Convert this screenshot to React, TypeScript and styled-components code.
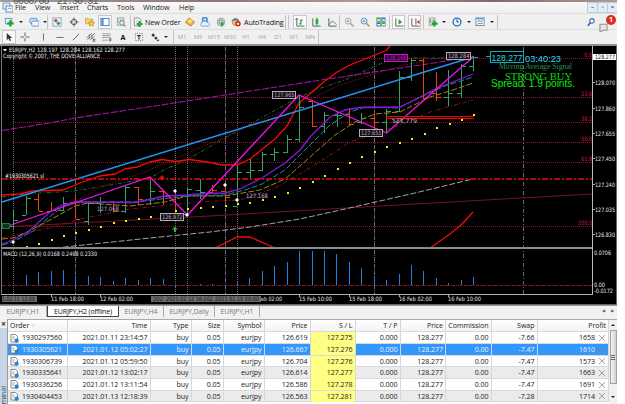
import React from "react";
import styled, { createGlobalStyle, css } from "styled-components";

const Global = createGlobalStyle`
  * { box-sizing: border-box; }
  body { margin: 0; background: #fff; overflow: hidden; font-family: "Open Sans", "Noto Sans", sans-serif; }
`;

const Window = styled.div`
  position: relative;
  display: flex;
  flex-direction: column;
  width: 617px;
  height: 404px;
  overflow: hidden;
  background: #f0f0f0;
`;
const Backdrop = styled.div`
  flex: none;
  height: 2px;
  background: linear-gradient(90deg, #a79c98, #8b7772 35%, #b79b95 60%, #806a66 80%, #b49a94);
`;
const Stamp = styled.div`
  position: absolute;
  left: 13px;
  top: -4px;
  z-index: 2;
  display: flex;
  gap: 8px;
  font: 10px/12px "Liberation Mono", monospace;
  letter-spacing: -0.9px;
  color: #555;
`;
const MenuBar = styled.div`
  flex: none;
  display: flex;
  align-items: center;
  height: 11px;
  padding-left: 2px;
  background: linear-gradient(#f8f8f8, #efefef);
`;
const MenuItem = styled.span<{ $w: number }>`
  width: ${(p) => p.$w}px;
  font-size: 7.2px;
  line-height: 11px;
  letter-spacing: -0.12px;
  color: #222;
  white-space: nowrap;
`;
const WindowButtons = styled.div`
  display: flex;
  margin-left: auto;
  height: 11px;
`;
const WindowButton = styled.span`
  width: 11px;
  height: 11px;
  margin-right: -1px;
  border: 1px solid #bccbdd;
  background: #e3edf8;
  color: #35506e;
  font: bold 6px/8px "Open Sans", sans-serif;
  text-align: center;
`;
const Toolbar = styled.div<{ $h: number }>`
  flex: none;
  display: flex;
  align-items: center;
  height: ${(p) => p.$h}px;
  border-top: 1px solid #dedede;
`;
const Slot = styled.div<{ $w: number; $pressed?: boolean }>`
  flex: none;
  display: flex;
  align-items: center;
  justify-content: center;
  width: ${(p) => p.$w}px;
  height: 14px;
  ${(p) =>
    p.$pressed &&
    css`
      background: #fafafa;
      border: 1px solid #c9c9c9;
    `}
`;
const Divider = styled.i`
  flex: none;
  width: 1px;
  height: 14px;
  background: #c4c4c4;
`;
const ToolLabel = styled.span<{ $w: number }>`
  flex: none;
  width: ${(p) => p.$w}px;
  font-size: 7.2px;
  letter-spacing: -0.15px;
  line-height: 14px;
  color: #111;
  white-space: nowrap;
`;
const Period = styled.span`
  flex: none;
  width: 16px;
  font-size: 6px;
  letter-spacing: -0.1px;
  color: #a5a5a5;
  text-align: center;
`;
const Caret = styled.i`
  border: 2px solid transparent;
  border-top: 2.5px solid #222;
  border-bottom: 0;
`;
const Spacer = styled.div`
  flex: 1;
`;
const ChatBox = styled.div`
  position: relative;
  width: 20px;
  height: 14px;
`;
const Badge = styled.span`
  position: absolute;
  left: 9px;
  top: 0;
  width: 10px;
  height: 10px;
  border-radius: 50%;
  background: #d8301d;
  color: #fff;
  font: bold 7px/10px "Open Sans", sans-serif;
  text-align: center;
`;
const ChartPane = styled.div`
  flex: none;
  height: 261px;
  border-top: 2px solid #929292;
  background: #000;
  svg { display: block; }
`;
const Tabs = styled.div`
  flex: none;
  display: flex;
  height: 14px;
  border-top: 1px solid #999;
  background: #f1f1f1;
`;
const Tab = styled.span<{ $w: number; $active?: boolean }>`
  flex: none;
  width: ${(p) => p.$w}px;
  height: 11px;
  font-size: 7px;
  line-height: 11px;
  letter-spacing: -0.16px;
  text-align: center;
  white-space: nowrap;
  color: ${(p) => (p.$active ? "#111" : "#7b7b7b")};
  border: solid ${(p) => (p.$active ? "#444" : "#aaa")};
  border-width: ${(p) => (p.$active ? "0 1px 1px 1px" : "0 1px 0 0")};
  background: ${(p) => (p.$active ? "#fff" : "transparent")};
`;
const TabArrows = styled.span`
  margin-left: auto;
  font-size: 4px;
  line-height: 10px;
  letter-spacing: 6px;
  margin-right: -3px;
  color: #555;
`;
const Terminal = styled.div`
  flex: 1;
  display: flex;
  min-height: 0;
  overflow: hidden;
`;
const Side = styled.div`
  display: flex;
  flex-direction: column;
  align-items: center;
  justify-content: space-between;
  width: 8px;
  background: linear-gradient(#f0f0f0 9px, #c6d6e7 9px);
  border-right: 1px solid #999;
  color: #222;
`;
const SideClose = styled.b`
  font-size: 8px;
  line-height: 9px;
`;
const SideTitle = styled.span`
  writing-mode: vertical-rl;
  transform: rotate(180deg);
  font-size: 7px;
  line-height: 7px;
  color: #33475c;
`;
const COLS = "59.5px 83px 41px 32px 41px 46px 45px 45px 45.5px 45.5px 46px 71.5px";
const Grid = styled.div`
  width: 601px;
  border-top: 1px solid #aaa;
  background: #fff;
`;
const Row = styled.div<{ $kind?: "head" | "sel" | "alt" }>`
  display: grid;
  grid-template-columns: ${COLS};
  height: ${(p) => (p.$kind === "head" ? 12.3 : 11.7)}px;
  font-size: 7.1px;
  line-height: 11.4px;
  letter-spacing: -0.06px;
  border-bottom: 1px solid #d9d9d9;
  color: ${(p) => (p.$kind === "sel" ? "#e8f3ff" : "#222")};
  background: ${(p) =>
    p.$kind === "sel" ? "#3296fa" : p.$kind === "alt" ? "#ebebeb" : p.$kind === "head" ? "linear-gradient(#fff, #f3f3f3)" : "#fff"};
`;
const Cell = styled.span<{ $left?: boolean; $stop?: boolean }>`
  display: flex;
  align-items: center;
  justify-content: ${(p) => (p.$left ? "flex-start" : "flex-end")};
  gap: 3px;
  height: 100%;
  padding: 0 2px;
  border-right: 1px solid #d4d8dc;
  white-space: nowrap;
  ${(p) =>
    p.$stop &&
    css`
      background: #ffff84;
      color: #222;
    `}
`;
const SortMark = styled.span`
  color: #999;
  font-size: 5px;
`;
const Scroll = styled.div`
  display: flex;
  flex-direction: column;
  align-items: center;
  width: 8px;
  border-top: 1px solid #aaa;
  background: #f1f1f1;
`;
const ScrollArrow = styled.i<{ $up?: boolean }>`
  margin: 4px 0;
  border: 2px solid transparent;
  ${(p) => (p.$up ? "border-bottom: 2.5px solid #222; border-top: 0;" : "margin-top: 12px; border-top: 2.5px solid #222; border-bottom: 0;")}
`;
const Thumb = styled.div`
  display: flex;
  flex-direction: column;
  align-items: center;
  justify-content: center;
  gap: 1px;
  width: 7px;
  height: 54px;
  border: 1px solid #a0a0a0;
  background: linear-gradient(90deg, #f6f6f6, #d0d0d0);
`;
const Grip = styled.i`
  width: 4px;
  height: 1px;
  background: #666;
`;

type IconName = string;
const art: Record<IconName, React.ReactNode> = {
  app: (<><rect x="0.5" y="0.5" width="7" height="6" fill="#e7f1fb" stroke="#6f9cc7" /><rect x="3.5" y="3.5" width="7" height="6" fill="#fff" stroke="#5b8ec2" /><path d="M5 7l2-1.5 2 1" stroke="#3a9bd0" fill="none" /></>),
  newChart: (<><rect x="1" y="1" width="7" height="6" fill="#eaf3fb" stroke="#6a94bb" /><path d="M6.5 3v7M3 6.5h7" stroke="#18a62b" strokeWidth="2.6" /></>),
  profiles: (<><rect x="0.5" y="1" width="8" height="5.5" rx="1" fill="#cfe2f6" stroke="#5d92c6" /><rect x="2.5" y="4" width="8" height="5.5" rx="1" fill="#f1f7fd" stroke="#5d92c6" /></>),
  market: (<><rect x="0.5" y="0.5" width="9" height="9" fill="#eef6ff" stroke="#7aa6cf" /><path d="M2 3.500L3.700 1.800 5.400 3.500 3.700 5.200z" fill="#e0382d" stroke="#e0382d" /><path d="M4.800 6.500L6.500 4.800 8.200 6.500 6.500 8.200z" fill="#22a538" stroke="#22a538" /></>),
  target: (<g stroke="#555" fill="none"><circle cx="5" cy="5" r="3" /><path d="M5 0v4M5 6v4M0 5h4M6 5h4" /></g>),
  navigator: (<><path d="M0 1h3l1 1h4v5H0z" fill="#f5d271" stroke="#c59431" strokeWidth=".7" /><path d="M6.500 3l1.100 2.200 2.400.3-1.800 1.700.5 2.500-2.200-1.200-2.200 1.200.5-2.500L3 5.500l2.400-.3z" fill="#ffc928" stroke="#b97d13" strokeWidth=".6" /></>),
  terminal: (<><rect x="0.500" y="1" width="9" height="8" fill="#fff" stroke="#3c7fc4" /><rect x="1" y="1" width="2.500" height="8" fill="#4c96dc" /></>),
  tester: (<><rect x="1" y="0.500" width="7" height="8" fill="#f5f5e9" stroke="#a69e7d" /><path d="M2.500 2v4M4.500 2v3M6.500 2v3" stroke="#7d93a8" strokeWidth=".8" /><circle cx="6" cy="6" r="2.500" fill="#d7edfd" stroke="#5289bb" /><path d="M8 8l2 2" stroke="#c49130" strokeWidth="1.500" /></>),
  order: (<><path d="M1 .5h5l2 2V9H1z" fill="#fff" stroke="#888" /><path d="M2.500 3h3M2.500 5h2" stroke="#999" strokeWidth=".7" /><path d="M6.500 4v6.500M3.500 7.200h6.500" stroke="#1bad2d" strokeWidth="2.400" /></>),
  gold: (<><path d="M0 5.500L4 0.500l6 4.500-4 4.500z" fill="#f0b030" stroke="#a8700f" strokeWidth=".8" /><path d="M2 4.500L4.500 1.500 8 4 5.500 7z" fill="#ffe08a" /></>),
  cloud: (<><rect x="2" y="0" width="5.500" height="6" rx="1" fill="#4a9fe3" stroke="#2d6fad" strokeWidth=".7" /><rect x="3.300" y="1.300" width="3" height="2" fill="#cbe6fb" /><path d="M1.500 9.500a1.800 1.800 0 010-3.500A3 3 0 017 5.500a2 2 0 012 4z" fill="#e9f2fb" stroke="#5d8ab5" strokeWidth=".8" /></>),
  radio: (<><circle cx="5" cy="5" r="4.200" fill="#d6dad6" stroke="#929b98" /><circle cx="5" cy="5" r="2.300" fill="none" stroke="#6e8b91" /><path d="M5 4.500V10c2 0 3-1.500 3-4z" fill="#35a547" /></>),
  auto: (<><circle cx="4.500" cy="5" r="3.800" fill="#f3c244" stroke="#a77b1e" strokeWidth=".7" /><path d="M0 3.500Q4.500-2 9 3.500z" fill="#3c86c7" /><circle cx="7.200" cy="7" r="3" fill="#dd2b22" /><rect x="6.200" y="6" width="2" height="2" fill="#fff" /></>),
  bars: (<><path d="M1.500 1v8.500H10M0 2.500l1.500-1.500L3 2.500" stroke="#555" fill="none" /><path d="M6 2v6M6 3h2M4 7h2" stroke="#159b31" strokeWidth="1.200" /></>),
  candle: (<><path d="M1.500 1v8.500H10" stroke="#555" fill="none" /><path d="M6 0v9" stroke="#137d25" /><rect x="4.500" y="2" width="3" height="5" fill="#20ae38" /></>),
  line: (<><path d="M1.500 1v8.500H10" stroke="#555" fill="none" /><path d="M2 8l3-4 2 1 3 3" stroke="#3c9950" fill="none" /></>),
  zoomIn: (<><path d="M6.500 6.500L10 10" stroke="#aaa" strokeWidth="1.800" /><circle cx="4" cy="4" r="3.300" fill="#eee" stroke="#a4a4a4" /><path d="M2.500 4h3M4 2.500v3" stroke="#999" /></>),
  zoomOut: (<><path d="M6.500 6.500L10 10" stroke="#d19a31" strokeWidth="1.800" /><circle cx="4" cy="4" r="3.300" fill="#d7edff" stroke="#4e94cd" /><path d="M2.500 4h3" stroke="#2e6fa9" /></>),
  tile: (<><path d="M0 0h4.700v4.700H0zM5.300 5.300H10V10H5.300z" fill="#39a73f" /><path d="M5.300 0H10v4.700H5.300zM0 5.300h4.700V10H0z" fill="#3974cc" /><path d="M1 2h3v1.500H1zM6.300 2h3v1.500h-3zM1 7.300h3v1.500H1zM6.300 7.300h3v1.500h-3z" fill="#fff" /></>),
  scroll: (<><path d="M1.500 1v8.500H10" stroke="#555" fill="none" /><path d="M4.500 2v6l4-3z" fill="#22a63b" /></>),
  shift: (<><path d="M1.500 1v8.500H10M6 1v7" stroke="#555" fill="none" /><path d="M10 2.500L7 5l3 2.500z" fill="#c9432b" /></>),
  indicator: (<><path d="M1 .5h6v8H1z" fill="#f6faf6" stroke="#8b9a8c" /><path d="M2.500 2v4M5 2v3" stroke="#777" /><path d="M6.500 3.500v6.500M3.500 6.800H10" stroke="#16a52b" strokeWidth="2.300" /></>),
  clock: (<><circle cx="5" cy="5" r="4.300" fill="#e6f3ff" stroke="#2478c6" strokeWidth="1.500" /><path d="M5 2v3h2" stroke="#333" fill="none" /></>),
  template: (<><rect x="0.500" y="0.500" width="9" height="8.500" fill="#fff" stroke="#548cc3" /><path d="M1 1.500h8" stroke="#61a1dc" strokeWidth="1.500" /><path d="M2 5l2-1.500 2 1 2-1" stroke="#c95335" fill="none" /><path d="M2 7.500l2-1 2 .5 2-1" stroke="#37a349" fill="none" /></>),
  search: (<><path d="M4.500 5.500L1.500 9" stroke="#355ba8" strokeWidth="1.700" /><circle cx="6" cy="3.800" r="2.500" fill="#f7fbff" stroke="#4768b8" strokeWidth="1.200" /></>),
  chat: (<path d="M2 4h6v5H5l-3 1.500L2 8z" fill="#e5e5e5" stroke="#929292" strokeWidth=".9" />),
  cursor: (<path d="M2.500 0.500v8l2-1.800 1.300 2.800 1.400-.6L6 6.200h2.600z" fill="#333" />),
  cross: (<path d="M5 0v4M5 6v4M0 5h4M6 5h4" stroke="#555" />),
  vline: (<path d="M5.500 1v8" stroke="#666" />),
  hline: (<path d="M1 5.500h8" stroke="#666" />),
  trend: (<path d="M1.500 8.500l7-7" stroke="#555" />),
  channel: (<><path d="M0 6l6-5M1 8l8-7M4 8l5-4M3 2v5M6 2v5" stroke="#777" fill="none" /><path d="M7.500 7.500H10M7.500 9.500H10M7.500 7v3" stroke="#333" strokeWidth=".8" /></>),
  fib: (<><path d="M0 1.500h9M0 3.500h9M0 5.500h9M0 8.500h6" stroke="#777" strokeDasharray="1.500 .6" /><path d="M8 10V7h2M8 8.500h2" stroke="#333" strokeWidth=".8" fill="none" /></>),
  labelBox: (<><rect x="1" y="1" width="8" height="8" fill="none" stroke="#777" strokeDasharray="1 1" /><path d="M3 3.500h4M5 3.500V8" stroke="#333" strokeWidth="1.200" /></>),
  arrows: (<path d="M1 3l2-2 2 2-2 2zM4 6l2-1.500L8 6 6 8zM6.500 8H10L8.200 10z" fill="#333" />),
};
const Icon = ({ n, s = 10 }: { n: IconName; s?: number }) => (
  <svg width={s} height={s} viewBox="-0.5 -0.5 11 11">{art[n]}</svg>
);

type Mark = "|" | "v";
type Tool = [string, number, boolean?] | Mark;
const fileTools: Tool[] = [
  ["newChart", 14], ["v", 10], ["profiles", 16], ["v", 5], "|", ["market", 17], ["target", 17], ["navigator", 16], ["terminal", 14, true],
  ["tester", 18], "|",
];
const chartTools: Tool[] = [
  "|", ["", 2], "|", ["", 4], ["bars", 14, true], ["candle", 17], ["line", 15], "|", ["", 1], ["zoomIn", 16], ["zoomOut", 16], ["tile", 16],
  "|", ["", 2], ["scroll", 13, true], ["", 3], ["shift", 13, true], ["", 2], "|", ["", 1], ["indicator", 15], ["v", 7], ["clock", 19],
  ["v", 5], ["template", 18], ["v", 6], ["", 2], "|",
];

const Tools = ({ items }: { items: Tool[] }) => (
  <>
    {items.map((t, i) =>
      typeof t === "string" ? (
        t === "|" ? <Divider key={i} /> : <Caret key={i} />
      ) : (
        <Slot key={i} $w={t[1]} $pressed={t[2]}>
          {t[0] === "v" ? <Caret /> : t[0] === "" ? null : <Icon n={t[0]} />}
        </Slot>
      )
    )}
  </>
);

const G = "#2fa666";
const O = "#dc4a10";
/* x, high, low, open, close, colour */
const ohlc: [number, number, number, number, number, string][] = [
  [13, 210, 229, 226, 220, G], [26, 196, 215, 215, 198, G], [38, 194, 211, 199, 211, O], [51, 202, 212, 211, 210, O],
  [63, 197, 211, 210, 203, G], [75, 197, 219, 203, 219, O], [88, 202, 225, 221, 203, G], [100, 197, 213, 203, 202, G],
  [113, 201, 212, 202, 211, O], [125, 186, 213, 211, 187, G], [138, 187, 205, 187, 199, O], [150, 178, 205, 199, 191, G],
  [163, 190, 205, 191, 196, O], [175, 190, 216, 195, 214, O], [187, 188, 216, 214, 189, G], [200, 179, 199, 190, 192, G],
  [212, 185, 194, 192, 190, O], [225, 185, 201, 191, 197, O], [237, 166, 206, 206, 172, G], [250, 159, 179, 172, 170, G],
  [262, 152, 171, 170, 154, G], [274, 148, 161, 154, 152, G], [287, 135, 153, 152, 139, G], [299, 95, 142, 139, 107, G],
  [312, 100, 127, 101, 126, O], [324, 112, 133, 126, 115, G], [337, 112, 127, 115, 115, G], [349, 108, 125, 114, 124, O],
  [361, 113, 124, 122, 118, G], [374, 114, 134, 118, 122, O], [386, 109, 133, 122, 111, G], [399, 71, 112, 111, 77, G],
  [411, 58, 81, 77, 60, G], [423, 59, 99, 60, 98, O], [436, 72, 101, 93, 97, O], [448, 70, 106, 97, 93, G],
  [461, 64, 98, 93, 66, G], [473, 56, 71, 66, 57, G],
];
const macd: [number, number][] = [
  [26, 275], [38, 272], [51, 271], [63, 270], [75, 276], [88, 276], [100, 277], [113, 281], [125, 278], [138, 280], [150, 278],
  [163, 279], [175, 287], [200, 284], [212, 284], [225, 288], [237, 282], [249, 278], [262, 271], [274, 266], [287, 262], [299, 251],
  [312, 251], [324, 251], [336, 254], [349, 262], [361, 268], [374, 276], [386, 280], [399, 274], [411, 265], [423, 271],
  [436, 278], [448, 283], [461, 280], [473, 277],
];
const dots: [number, number][] = [
  [26, 246], [38, 243], [51, 239], [63, 235], [75, 232], [88, 229], [100, 226], [113, 222], [125, 220], [138, 218], [150, 216], [175, 210],
  [187, 208], [200, 207], [212, 206], [225, 205], [237, 203], [249, 202], [262, 199], [274, 196], [287, 192], [299, 187], [312, 181], [324, 175],
  [337, 168], [349, 162], [361, 156], [374, 151], [386, 146], [399, 142], [411, 138], [424, 133], [436, 127], [449, 123], [461, 119], [473, 114],
];
const fibs: [number, string][] = [[58, "0.0"], [97, "23.6"], [122, "38.2"], [142, "50.0"], [162, "61.8"], [226, "100.0"]];
const prices: [number, string][] = [
  [82, "128.070"], [108, "127.860"], [133, "127.655"], [158, "127.450"], [184, "127.240"], [209, "127.035"], [234, "126.830"],
];
const times: [number, string][] = [
  [51, "11 Feb 18:00"], [100, "12 Feb 02:00"], [299, "15 Feb 10:00"], [349, "15 Feb 18:00"], [399, "16 Feb 02:00"], [448, "16 Feb 10:00"],
];

type LProps = { p: string; c: string; d?: string; w?: number };
const L = ({ p, c, d, w = 1 }: LProps) => (
  <polyline points={p} fill="none" stroke={c} strokeDasharray={d} strokeWidth={w} />
);
type TProps = { x: number; y: number; w: number; t: string; c?: string; s?: number; f?: string };
const T = ({ x, y, w, t, c = "#e8e8e8", s = 6, f = "DejaVu Sans" }: TProps) => (
  <text x={x} y={y} fontSize={s} fill={c} textLength={w} lengthAdjust="spacingAndGlyphs" fontFamily={`"${f}", sans-serif`}>{t}</text>
);
type PProps = { x: number; y: number; w: number; t: string; c?: string; bg?: string };
const PriceTag = ({ x, y, w, t, c = "#b9a9bd", bg = "#111" }: PProps) => (
  <g>
    <rect x={x + 0.5} y={y + 0.5} width={w} height="7" fill={bg} stroke={c} />
    <T x={x + 2} y={y + 6.4} w={w - 2.5} t={t} c={c} />
  </g>
);

const Chart = () => (
  <svg width="617" height="259" viewBox="0 46 617 259">
    <rect y="46" width="617" height="259" fill="#000" />
    <g shapeRendering="crispEdges">
      {fibs.map(([y]) => <L key={y} p={`13,${y + 0.5} 592,${y + 0.5}`} c="#96142a" d="1 1" />)}
      <L p="2,285.5 592,285.5" c="#9c1424" d="3 1 1 1" />
      {[13.5, 175.5, 187.5, 237.5].map((x) => <L key={x} p={`${x},47 ${x},294`} c="#686868" d="1 1" />)}
      {[75.5, 225.5, 374.5].map((x) => <L key={x} p={`${x},47 ${x},294`} c="#77627c" d="4 1 1 1" />)}
      <L p="523.5,47 523.5,294" c="#686868" d="4 2 1 2" />
    </g>
    <L p="2,130.500 52,122.500 75,118 155,106 225,95 315,81 400,68 440,62 473,56" c="#a010a0" d="7 1.500" w={1.1} />
    <L p="2,197 25,194 75,191 110,185 150,178 162,171 190,158 225,138 290,102 315,90 345,80 380,64 400,58 473,58" c="#226a2a" d="4 2 1 2" />
    <L p="75,202 100,187 145,172 160,165 225,137 250,125 300,104 340,85 400,66 440,58 473,58" c="#7a151e" d="1.500 1.500" />
    <L p="2,238 50,228 85,218 130,209 200,202 240,200 275,188 310,168 350,142 400,125 430,112 473,100" c="#8c1616" d="4 2 1 2" />
    <L p="2,227 210,216 415,204 592,194" c="#761126" />
    <L p="55,248 150,238 210,232 250,227 300,219 345,209 415,193 473,179" c="#a3a3a3" d="6 2" />
    <L p="2,195 20,194 32,191 63,190 80,183 100,176 115,174 125,169 137,167 150,162 162,159.500 175,161.500 190,159.500 210,162.500 222,165 237,165 250,159 265,147 275,139 287,126 299,103 312,92 325,81 337,72 350,65 370,57 386,50.500 390,46" c="#f50a0a" w={1.3} />
    <L p="215,248 237,237 250,237 275,248" c="#f50a0a" w={1.3} />
    <L p="430,248 450,234 461,225 473,212" c="#f50a0a" w={1.3} />
    <g shapeRendering="crispEdges">
      {ohlc.map(([x, h, l, o, c, k]) => (
        <path key={x} d={`M${x + 0.5} ${h}V${l}M${x - 4} ${o + 0.5}h4M${x + 1} ${c + 0.5}h4`} stroke={k} fill="none" />
      ))}
      {macd.map(([x, y]) => <path key={x} d={`M${x + 0.5} ${Math.min(y, 285)}V${Math.max(y, 285)}`} stroke="#1e80d8" />)}
    </g>
    <L p="2,239 13,238 25,233 50,220 75,206 88,203 130,206 165,202 187,196 225,196 260,190 285,179 300,166 310,157 335,135 355,122 375,114 400,112 430,97 450,91 473,83" c="#a5821c" d="6 2" />
    <L p="2,245 13,242 35,230 48,218 65,205 75,202 135,202 187,196 225,195 245,190 262,184 285,170 300,155 310,145 330,125 350,112 365,107 398,108 425,95 445,86 473,77" c="#138c90" d="6 2" />
    <L p="2,244 13,240 28,232 50,212 62,205 75,202 85,202 135,202.500 165,196 187,195 205,193.500 225,193 240,189 250,184 262,178 285,163 300,150 310,137 330,117 345,110 360,107.500 400,107 420,97 435,89 473,74" c="#8a18dc" w={1.3} />
    <L p="2,202 473,57" c="#2493f3" w={1.4} />
    <L p="2,228 150,177 187.500,215 299,95 386.500,133 473,57" c="#f212e6" w={1.3} />
    <L p="2,179 592,179" c="#e60a0a" d="6 2 2 2" w={1.6} />
    <g shapeRendering="crispEdges">
      {dots.map(([x, y]) => <rect key={x} x={x} y={y} width="1.500" height="1.500" fill="#f4f400" />)}
      <path d="M386 116.500H474M386 118.500H474" stroke="#f90000" strokeWidth="1.400" />
    </g>

    <path d="M13 240l-1.500 2 1.500 2 2-2zM175 189l-2 2 2 2 2-2zM225 183l-2 2 2 2 2-2zM237 198l-2 2 2 2 2-2zM187 213l-2 2 2 2 2-2z" fill="#fff" />
    <path d="M162 175l3 3h-2v2h-2v-2h-2z" fill="#c41414" />
    <path d="M175 226.500l3 3h-2v2.500h-2v-2.500h-2z" fill="#24b93a" />

    <path d="M3 49h4l-2 2.500z" fill="#fff" />
    <T x={9} y={52.200} w={116} t="EURJPY,H2  128.197 128.284 128.162 128.277" />
    <T x={3} y={58} w={97} t="Copyright © 2007, THE DOVE ALLIANCE" />
    <T x={5} y={178} w={39} t="#1930305621 sl" c="#fff" />
    <rect x="2.500" y="223.500" width="7" height="5" fill="#0d3516" stroke="#1f7a35" />
    <T x={97} y={211} w={22} t="127.068" c="#b7a8d8" />
    <T x={246} y={198} w={22} t="127.168" c="#c4b8e8" />
    <PriceTag x={272} y={91} w={23} t="127.965" />
    <PriceTag x={359} y={129} w={23} t="127.651" />
    <PriceTag x={160} y={213} w={23} t="126.972" />
    <PriceTag x={384} y={54} w={23} t="128.268" c="#c218c2" bg="#2a062a" />
    <PriceTag x={446} y={52} w={24} t="128.284" />
    <T x={392} y={123} w={25} t="127.779" c="#b9b3c9" />
    <L p="392,119 396,122 400,118 403,123" c="#2e9e63" />

    <rect x="490.500" y="51.500" width="33" height="11" fill="#000" stroke="#10a9b4" />
    <L p="486,56.500 490,56.500" c="#10a9b4" />
    <T x={491.500} y={60.700} w={31} t="128.277" c="#27dbe8" s={9.800} f="Liberation Sans" />
    <T x={525} y={61.500} w={36} t="03:40:23" c="#27dbe8" s={8.8} f="Liberation Sans" />
    <T x={499} y={68.700} w={73} t="Moving Average Signal" c="#2b9157" s={7.8} f="Liberation Serif" />
    <T x={505} y={79.500} w={67} t="STRONG BUY" c="#08dc08" s={10.6} f="Liberation Serif" />
    <T x={491} y={87} w={84} t="Spread: 1.9 points." c="#08ee08" s={10} f="Liberation Sans" />

    {fibs.map(([y, t]) => <T key={t} x={t === "0.0" ? 584 : t === "100.0" ? 578 : 581} y={y - 1} w={t === "0.0" ? 8 : t === "100.0" ? 14 : 11} t={t} c="#d01a40" />)}

    <g shapeRendering="crispEdges">
      <rect x="1" y="46" width="1" height="249" fill="#777" />
      <rect x="1" y="247" width="591" height="2" fill="#8b8b8b" />
      <rect x="592" y="46" width="1" height="249" fill="#b9b9b9" />
      <rect x="1" y="294" width="592" height="1" fill="#b0b0b0" />
      <rect x="593" y="54" width="24" height="6" fill="#fff" />
      <rect x="616" y="46" width="1" height="259" fill="#666" />
    </g>
    <T x={595} y={59.200} w={20} t="128.277" c="#111" />
    {prices.map(([y, t]) => (
      <g key={t}>
        <rect x="593" y={y} width="2" height="1" fill="#aaa" />
        <T x={595} y={y + 2.700} w={20} t={t} />
      </g>
    ))}
    <T x={594} y={255} w={17} t="0.0706" />
    <T x={594} y={287} w={11} t="0.00" />
    <T x={594} y={293} w={19} t="-0.0172" />
    <T x={3} y={255.500} w={94} t="MACD (12,26,9) 0.0168 0.2498 0.2330" />
    {times.map(([x, t]) => (
      <g key={t}>
        <rect x={x} y="295" width="1" height="2" fill="#aaa" />
        <T x={x} y={301.300} w={33} t={t} />
      </g>
    ))}
    <T x={261} y={301.300} w={21} t="eb 02:00" />
    <rect x="2" y="296" width="35" height="6" fill="#6c6c6c" />
    <T x={2} y={301.300} w={33} t="1.02.11 12:00" c="#111" />
    <rect x="151" y="296" width="110" height="6" fill="#6c6c6c" />
    <T x={153} y={301.300} w={10} t="202" c="#111" />
    <T x={166} y={301.300} w={47} t="2021.02.12 16:202" c="#111" />
    <T x={215} y={301.300} w={44} t="2021.02.15 00:00" c="#111" />
    <rect x="0" y="304" width="617" height="1" fill="#666" />
  </svg>
);

const head = ["Order", "Time", "Type", "Size", "Symbol", "Price", "S / L", "T / P", "Price", "Commission", "Swap", "Profit"];
const orders = [
  ["1930297560", "2021.01.11 23:14:57", "126.619", "127.275", "-7.66", "1658"],
  ["1930305621", "2021.01.12 05:02:27", "126.667", "127.276", "-7.47", "1610"],
  ["1930306739", "2021.01.12 05:59:50", "126.704", "127.276", "-7.47", "1573"],
  ["1930335641", "2021.01.12 13:02:17", "126.614", "127.277", "-7.47", "1663"],
  ["1930336256", "2021.01.12 13:11:54", "126.586", "127.278", "-7.47", "1691"],
  ["1930404453", "2021.01.13 12:18:39", "126.563", "127.281", "-7.28", "1714"],
];

const OrderIcon = () => (
  <svg width="9" height="9" viewBox="0 0 9 9">
    <path d="M1 .5h4.500l2 2V8H1z" fill="#fff" stroke="#7a7a7a" strokeWidth=".9" />
    <path d="M2.500 3h2M2.500 5h2" stroke="#777" strokeWidth=".8" />
    <circle cx="6.700" cy="6.700" r="2.100" fill="#2285cf" />
  </svg>
);
const CloseIcon = () => (
  <svg width="8" height="8" viewBox="0 0 8 8"><path d="M1 1l6 6M7 1L1 7" stroke="#8c8c8c" strokeWidth=".8" /></svg>
);

export default function App() {
  return (
    <Window>
      <Global />
      <Backdrop />
      <Stamp><span>0000/06</span><span>21:36:31</span></Stamp>
      <MenuBar>
        <Icon n="app" s={11} />
        <MenuItem $w={2} />
        <MenuItem $w={20}>File</MenuItem>
        <MenuItem $w={25}>View</MenuItem>
        <MenuItem $w={27}>Insert</MenuItem>
        <MenuItem $w={30}>Charts</MenuItem>
        <MenuItem $w={26}>Tools</MenuItem>
        <MenuItem $w={36}>Window</MenuItem>
        <MenuItem $w={20}>Help</MenuItem>
        <WindowButtons>
          <WindowButton>–</WindowButton>
          <WindowButton>▫</WindowButton>
          <WindowButton>×</WindowButton>
        </WindowButtons>
      </MenuBar>
      <Toolbar $h={16}>
        <Slot $w={2} />
        <Tools items={fileTools} />
        <Slot $w={14}><Icon n="order" /></Slot>
        <ToolLabel $w={37}>New Order</ToolLabel>
        <Tools items={[["gold", 15], ["cloud", 16], ["radio", 15], ["auto", 16]]} />
        <ToolLabel $w={41}>AutoTrading</ToolLabel>
        <Tools items={chartTools} />
        <Spacer />
        <Slot $w={12}><Icon n="search" /></Slot>
        <ChatBox>
          <Icon n="chat" s={13} />
          <Badge>1</Badge>
        </ChatBox>
      </Toolbar>
      <Toolbar $h={15}>
        <Slot $w={2} />
        <Tools items={[["cursor", 14, true], ["cross", 18], ["vline", 18], ["hline", 16], ["trend", 15], ["channel", 16], ["fib", 16]]} />
        <Slot $w={16}><ToolLabel $w={5}><b>A</b></ToolLabel></Slot>
        <Tools items={[["labelBox", 16], ["arrows", 16], ["v", 6], ["", 4], "|"]} />
        {["M1", "M5", "M15", "M30", "H1", "H4", "D1", "W1", "MN"].map((m) => <Period key={m}>{m}</Period>)}
        <Divider />
      </Toolbar>
      <ChartPane><Chart /></ChartPane>
      <Tabs>
        <Tab $w={47}>EURJPY,H1</Tab>
        <Tab $w={72} $active>EURJPY,H2 (offline)</Tab>
        <Tab $w={45}>EURJPY,H4</Tab>
        <Tab $w={51}>EURJPY,Daily</Tab>
        <Tab $w={45}>EURJPY,H1</Tab>
        <TabArrows>◀▶</TabArrows>
      </Tabs>
      <Terminal>
        <Side>
          <SideClose>×</SideClose>
          <SideTitle>minal</SideTitle>
        </Side>
        <Grid>
          <Row $kind="head">
            {head.map((h, i) => (
              <Cell key={i} $left={i === 0}>{h}{i === 0 && <SortMark>∕</SortMark>}</Cell>
            ))}
          </Row>
          {orders.map(([id, time, price, sl, swap, profit], i) => (
            <Row key={id} $kind={i === 1 ? "sel" : i % 2 ? "alt" : undefined}>
              <Cell $left><OrderIcon />{id}</Cell>
              <Cell>{time}</Cell>
              <Cell>buy</Cell>
              <Cell>0.05</Cell>
              <Cell>eurjpy</Cell>
              <Cell>{price}</Cell>
              <Cell $stop>{sl}</Cell>
              <Cell>0.000</Cell>
              <Cell>128.277</Cell>
              <Cell>0.00</Cell>
              <Cell>{swap}</Cell>
              <Cell>{profit}<CloseIcon /></Cell>
            </Row>
          ))}
        </Grid>
        <Scroll>
          <ScrollArrow $up />
          <Thumb><Grip /><Grip /><Grip /></Thumb>
          <ScrollArrow />
        </Scroll>
      </Terminal>
    </Window>
  );
}
